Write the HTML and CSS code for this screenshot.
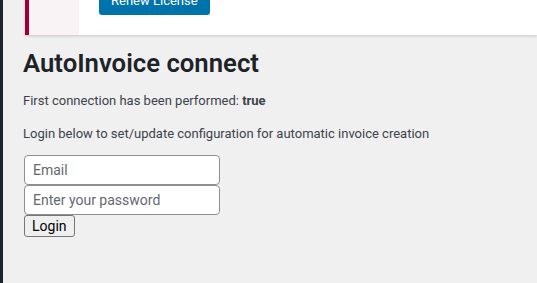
FILE: index.html
```html
<!DOCTYPE html>
<html lang="en">
<head>
    <meta charset="UTF-8">
    <meta name="viewport" content="width=device-width, initial-scale=1.0">
    <title>AutoInvoice connect</title>
    <link rel="stylesheet" href="styles.css">
</head>
<body>
    <div class="admin-menu"></div>

    <div class="main">
        <div class="notice">
            <div class="notice-icon"></div>
            <div class="notice-body">
                <a class="renew-button" href="#">Renew License</a>
            </div>
        </div>

        <div class="wrap">
            <h1>AutoInvoice connect</h1>
            <p class="status">First connection has been performed: <strong>true</strong></p>
            <p>Login below to set/update configuration for automatic invoice creation</p>

            <form class="login-form" onsubmit="return false;">
                <input type="email" class="field" placeholder="Email">
                <input type="password" class="field" placeholder="Enter your password">
                <button type="submit" class="login-button">Login</button>
            </form>
        </div>
    </div>
</body>
</html>
```

FILE: styles.css
```css
        html, body {
            height: 100%;
        }
        body {
            margin: 0;
            background-color: #f0f0f1;
            color: #3c434a;
            font-family: Roboto, "Liberation Sans", sans-serif;
            font-size: 13px;
            display: flex;
            overflow: hidden;
        }
        .admin-menu {
            width: 3px;
            flex-shrink: 0;
            background-color: #1d2327;
        }
        .main {
            flex: 1;
            padding-left: 20px;
        }
        .notice {
            display: flex;
            margin-left: 2px;
            margin-top: -20px;
            background-color: #fff;
            border-left: 4px solid #9a0037;
            box-shadow: 0 1px 3px rgba(0, 0, 0, 0.18);
        }
        .notice-icon {
            width: 50px;
            background-color: #f9f3f5;
        }
        .notice-body {
            padding: 7px 20px 20px 20px;
        }
        .renew-button {
            display: inline-block;
            background-color: #0073aa;
            color: #fff;
            text-decoration: none;
            font-size: 13px;
            line-height: 28px;
            padding: 0 12px;
            border-radius: 3px;
        }
        h1 {
            font-size: 25.7px;
            font-weight: 600;
            color: #1d2327;
            margin: 11px 0 0 0;
            line-height: 34px;
        }
        p {
            margin: 13px 0;
            line-height: 1.5;
        }
        .status {
            margin-top: 11px;
        }
        .login-form {
            display: flex;
            flex-direction: column;
            align-items: flex-start;
            margin-top: 12px;
            margin-left: 1px;
        }
        .wrap p:last-of-type {
            margin-bottom: 12px;
        }
        .field {
            box-sizing: border-box;
            width: 196px;
            height: 30px;
            margin: 0;
            padding: 0 8px;
            border: 1px solid #8c8f94;
            border-radius: 4px;
            background-color: #fff;
            font-family: Roboto, "Liberation Sans", sans-serif;
            font-size: 14px;
            color: #2c3338;
        }
        .field::placeholder {
            color: #646970;
        }
        .login-button {
            font-family: Roboto, "Liberation Sans", sans-serif;
            font-size: 14px;
            height: 22px;
            padding: 0 7px;
            margin: 0;
            color: #000;
            background-color: #efefef;
            border: 1px solid #767676;
            border-radius: 3px;
        }
```
